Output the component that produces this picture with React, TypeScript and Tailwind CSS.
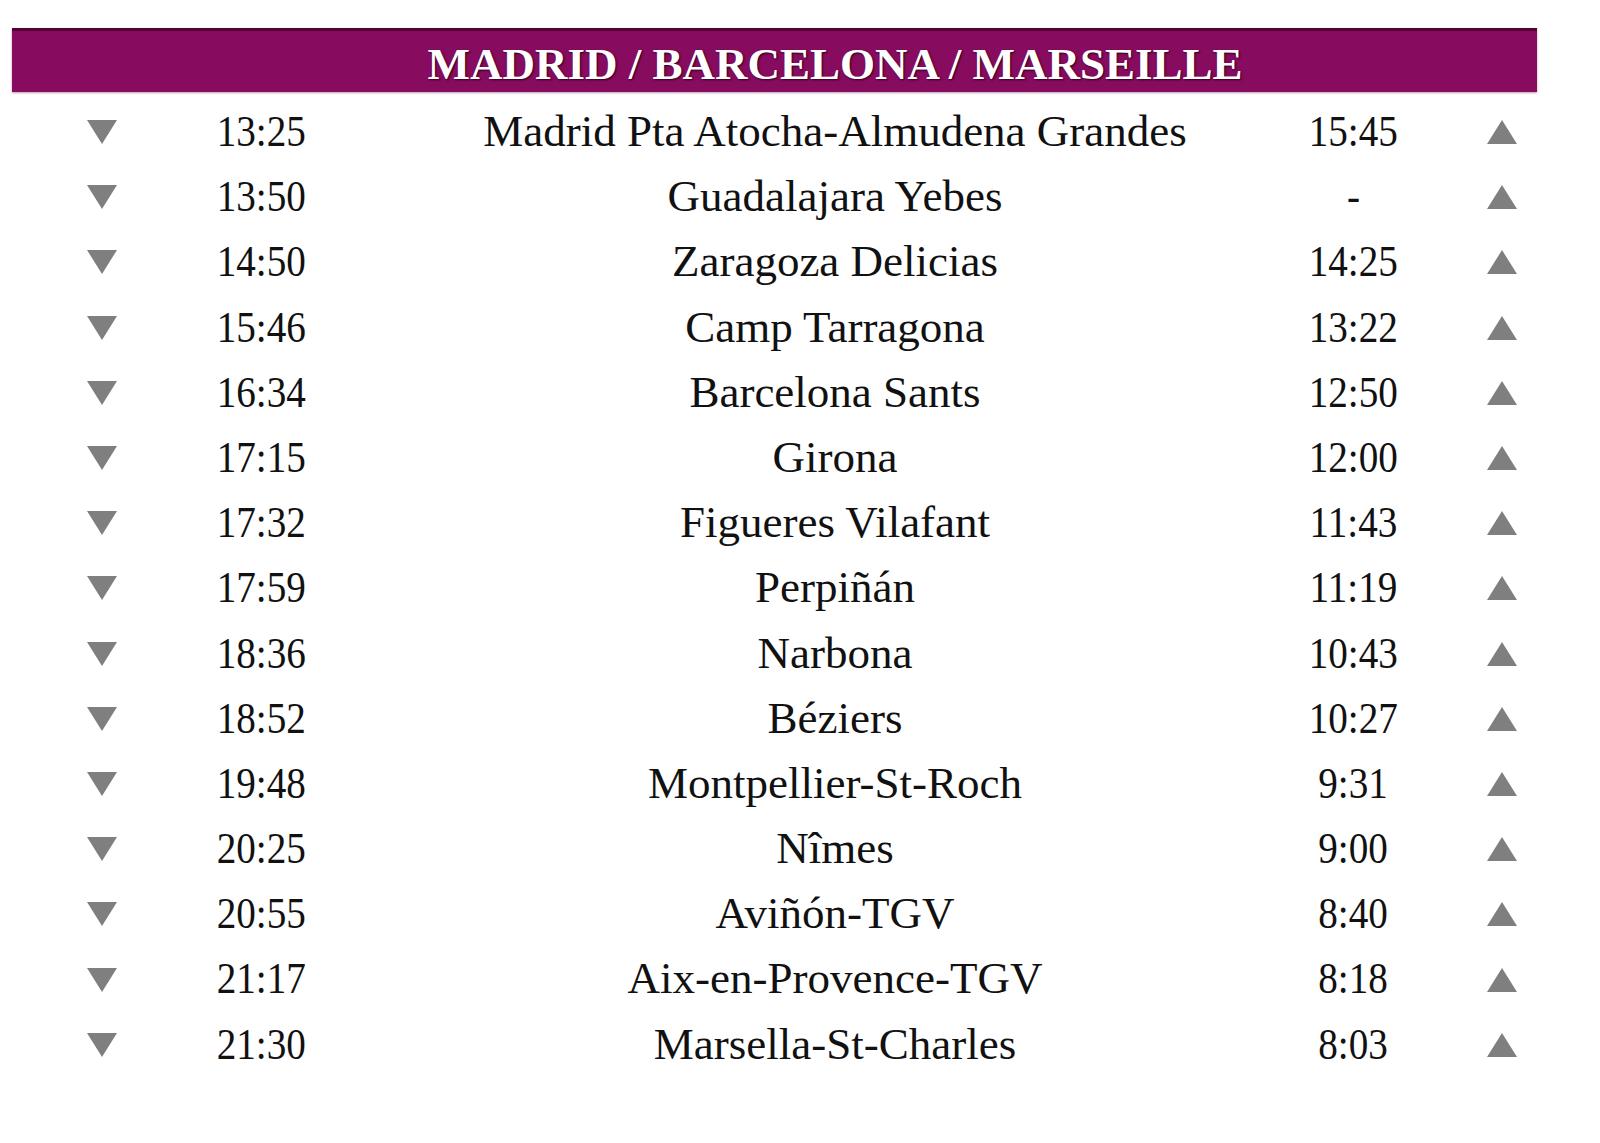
import React from "react";

const rows: [string, string, string][] = [
  ["13:25", "Madrid Pta Atocha-Almudena Grandes", "15:45"],
  ["13:50", "Guadalajara Yebes", "-"],
  ["14:50", "Zaragoza Delicias", "14:25"],
  ["15:46", "Camp Tarragona", "13:22"],
  ["16:34", "Barcelona Sants", "12:50"],
  ["17:15", "Girona", "12:00"],
  ["17:32", "Figueres Vilafant", "11:43"],
  ["17:59", "Perpiñán", "11:19"],
  ["18:36", "Narbona", "10:43"],
  ["18:52", "Béziers", "10:27"],
  ["19:48", "Montpellier-St-Roch", "9:31"],
  ["20:25", "Nîmes", "9:00"],
  ["20:55", "Aviñón-TGV", "8:40"],
  ["21:17", "Aix-en-Provence-TGV", "8:18"],
  ["21:30", "Marsella-St-Charles", "8:03"],
];

function Down() {
  return (
    <svg width="30" height="24" viewBox="0 0 30 24" className="mt-[1px]">
      <polygon points="0,0 30,0 15,24" fill="#7f7f7f" />
    </svg>
  );
}

function Up() {
  return (
    <svg width="30" height="24" viewBox="0 0 30 24" className="mt-[1px]">
      <polygon points="15,0 30,24 0,24" fill="#7f7f7f" />
    </svg>
  );
}

export default function App() {
  return (
    <div className="min-h-[1143px] w-[1600px] bg-white" style={{ fontFamily: '"Liberation Serif", "Times New Roman", serif' }}>
      <div className="ml-[12px] w-[1525px] pt-[28px]">
        <div className="h-[64px] border-t-[3px] border-[#560038] bg-[#870b5e] pl-[121px] pt-[5px] text-center text-[45px] font-bold leading-[56px] text-white [text-shadow:1px_1px_2px_#2a0018] shadow-[0_1px_2px_rgba(80,0,50,0.4)]">
          MADRID / BARCELONA / MARSEILLE
        </div>
        <div className="mt-[7px] flex flex-col text-[45px] leading-[65.2px] text-[#111]">
          {rows.map(([t1, st, t2]) => (
            <div key={st} className="flex h-[65.2px] items-center">
              <div className="flex w-[180px] justify-center">
                <Down />
              </div>
              <div className="flex w-[138px] justify-center whitespace-nowrap">
                <span className="inline-block scale-x-[0.87]">{t1}</span>
              </div>
              <div className="ml-[32px] flex w-[946px] justify-center whitespace-nowrap">{st}</div>
              <div className="flex w-[90px] justify-center whitespace-nowrap">
                <span className="inline-block scale-x-[0.87]">{t2}</span>
              </div>
              <div className="ml-[69px] flex w-[70px] justify-center">
                <Up />
              </div>
            </div>
          ))}
        </div>
      </div>
    </div>
  );
}
